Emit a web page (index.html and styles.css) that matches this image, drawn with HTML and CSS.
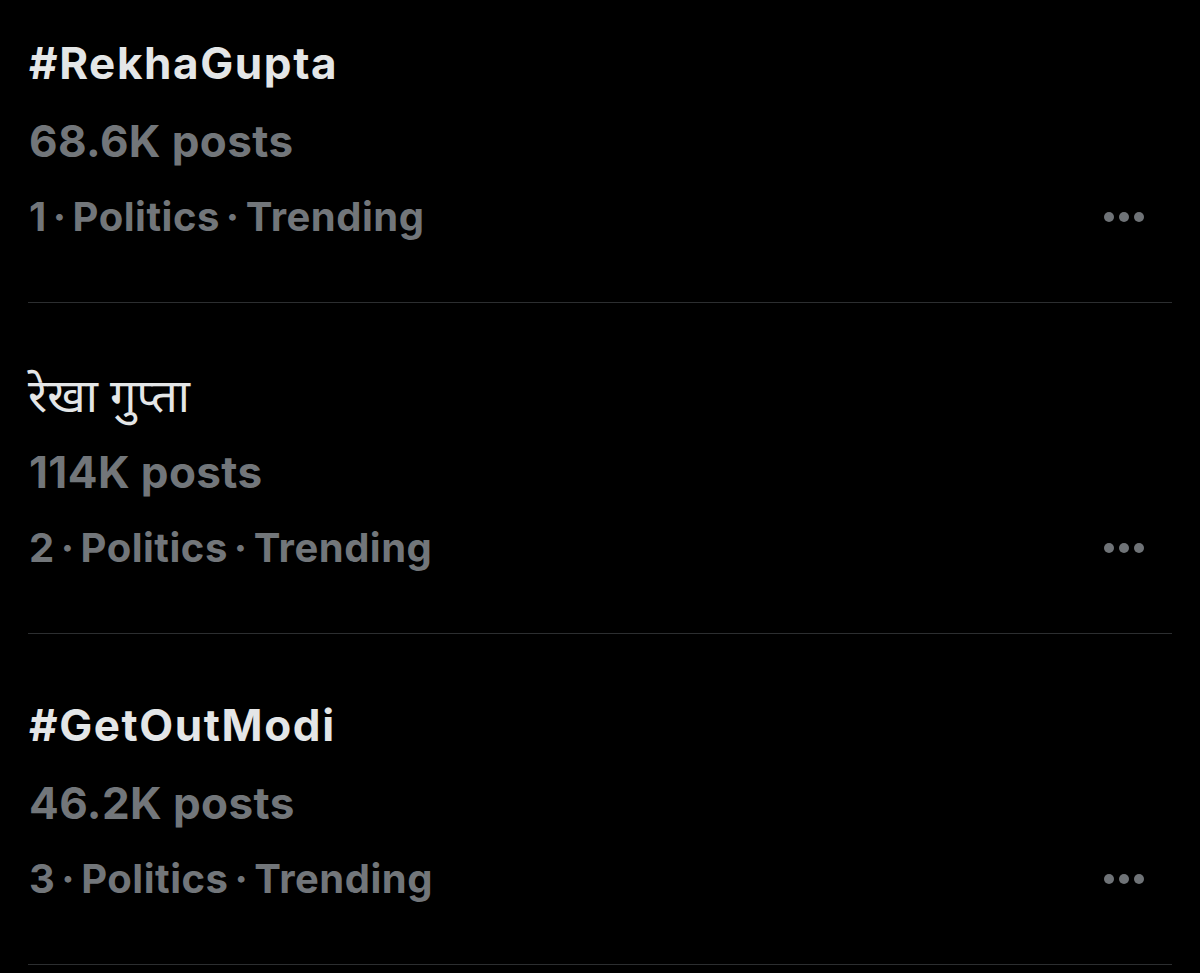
FILE: index.html
```html
<!DOCTYPE html>
<html lang="en">
<head>
<meta charset="utf-8">
<title>Trends</title>
<link rel="stylesheet" href="styles.css">
</head>
<body>
<div class="trends">
  <div class="trend">
    <div class="title">#RekhaGupta</div>
    <div class="posts">68.6K posts</div>
    <div class="meta">
      <span class="meta-text">1<span class="sep">·</span>Politics<span class="sep">·</span>Trending</span>
      <span class="more"><i></i><i></i><i></i></span>
    </div>
  </div>
  <div class="trend">
    <div class="title deva">रेखा गुप्ता</div>
    <div class="posts">114K posts</div>
    <div class="meta">
      <span class="meta-text">2<span class="sep">·</span>Politics<span class="sep">·</span>Trending</span>
      <span class="more"><i></i><i></i><i></i></span>
    </div>
  </div>
  <div class="trend">
    <div class="title">#GetOutModi</div>
    <div class="posts">46.2K posts</div>
    <div class="meta">
      <span class="meta-text">3<span class="sep">·</span>Politics<span class="sep">·</span>Trending</span>
      <span class="more"><i></i><i></i><i></i></span>
    </div>
  </div>
</div>
</body>
</html>
```

FILE: styles.css
```css
html, body {
  margin: 0;
  padding: 0;
  background: #000;
  height: 100%;
  overflow: hidden;
}
body {
  font-family: Inter, "Liberation Sans", sans-serif;
  font-weight: 700;
  font-size: 44px;
  -webkit-font-smoothing: antialiased;
}
.trends {
  display: flex;
  flex-direction: column;
  padding: 0 28px;
}
.trend {
  display: flex;
  flex-direction: column;
  padding: 52px 0 47px;
  border-bottom: 1px solid #2c2e30;
}
.trend:first-child {
  padding-top: 24px;
}
.title {
  color: #e4e6e7;
  line-height: 79px;
  height: 79px;
  padding-left: 1px;
  letter-spacing: 1.6px;
}
.title.deva {
  font-weight: 400;
  font-size: 47px;
  letter-spacing: 0;
  padding-left: 0;
  font-family: "Noto Sans", "Noto Sans Devanagari", "Lohit Devanagari", sans-serif;
}
.posts {
  color: #72767a;
  line-height: 76px;
  height: 76px;
  padding-left: 1px;
  letter-spacing: 0.4px;
}
.meta {
  display: flex;
  align-items: center;
  justify-content: space-between;
  color: #72767a;
  font-size: 40px;
  line-height: 76px;
  height: 76px;
  padding-left: 1px;
  padding-right: 28px;
}
.meta-text {
  letter-spacing: 0.5px;
}
.sep {
  margin: 0 6px;
}
.more {
  display: flex;
  gap: 5px;
  align-items: center;
}
.more i {
  display: block;
  width: 10px;
  height: 10px;
  border-radius: 50%;
  background: #6f7377;
}
```
